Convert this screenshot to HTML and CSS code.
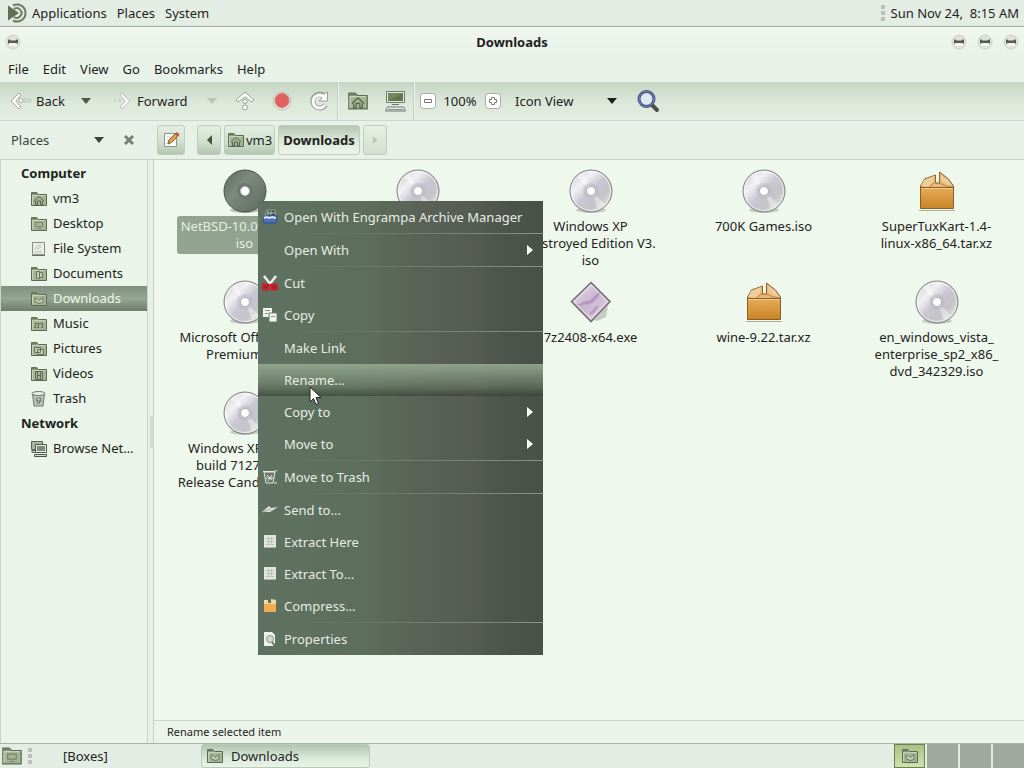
FILE: index.html
```
<!DOCTYPE html>
<html lang="en">
<head>
  <meta charset="UTF-8">
  <title>Downloads</title>
  <link rel="stylesheet" href="styles.css">
</head>
<body>
  <!-- shared icons -->
  <svg class="defs" width="0" height="0" aria-hidden="true">
    <defs>
      <linearGradient id="g-disc" x1="0" y1="0" x2="1" y2="1">
        <stop offset="0" stop-color="#c3c4c6"/>
        <stop offset=".3" stop-color="#f1f1f4"/>
        <stop offset=".5" stop-color="#c9c7d2"/>
        <stop offset=".7" stop-color="#c4c4c8"/>
        <stop offset="1" stop-color="#f3f5f1"/>
      </linearGradient>
      <linearGradient id="g-dark" x1="0" y1="0" x2="1" y2="1">
        <stop offset="0" stop-color="#5f6b5e"/>
        <stop offset=".4" stop-color="#7c897b"/>
        <stop offset="1" stop-color="#5d695c"/>
      </linearGradient>
      <linearGradient id="g-box" x1="0" y1="0" x2="0" y2="1">
        <stop offset="0" stop-color="#e6ab58"/>
        <stop offset="1" stop-color="#c98425"/>
      </linearGradient>
      <linearGradient id="g-exe" x1="0" y1="0" x2="1" y2="1">
        <stop offset="0" stop-color="#e8e0ea"/>
        <stop offset=".5" stop-color="#cbb5d1"/>
        <stop offset="1" stop-color="#e2d8e5"/>
      </linearGradient>
      <symbol id="disc" viewBox="0 0 44 44">
        <ellipse cx="22" cy="41" rx="15" ry="3" fill="#c5cec3"/>
        <circle cx="22" cy="22" r="21" fill="url(#g-disc)" stroke="#7d817d"/>
        <circle cx="22" cy="22" r="19.5" fill="none" stroke="#fff" stroke-opacity=".6"/>
        <path d="M22 22 8 8l6-4zM22 22l14 13-7 5z" fill="#fff" fill-opacity=".4"/>
        <circle cx="22" cy="22" r="8" fill="#b9b9c4" fill-opacity=".55"/>
        <circle cx="22" cy="22" r="4.5" fill="#fff" stroke="#b1b1b9"/>
      </symbol>
      <symbol id="disc-dark" viewBox="0 0 44 44">
        <ellipse cx="22" cy="41" rx="15" ry="3" fill="#b5beb3"/>
        <circle cx="22" cy="22" r="21" fill="url(#g-dark)" stroke="#4a554a"/>
        <circle cx="22" cy="22" r="8" fill="#6d776f"/>
        <circle cx="22" cy="22" r="4.5" fill="#fff" stroke="#b6c0b5"/>
      </symbol>
      <symbol id="box" viewBox="0 0 44 44">
        <path d="M4 41.500h36" stroke="#a9ad98"/>
        <path d="M5.500 20v-3l4-7 11-4v8h4V3l9 7 5 7v3z" fill="#e9b875" stroke="#86653a" stroke-linejoin="round"/>
        <path d="m9 11 10-4-1 6-5 5-7-1zM26 6l7 5 4 6-6-2-5-4z" fill="#f0cc98"/>
        <path d="m6 18 7 1 6-5h5l7 3 7 1" fill="none" stroke="#b98a4c"/>
        <path d="M5.500 18.500h33v21h-33z" fill="url(#g-box)" stroke="#86602a"/>
        <path d="M6.500 19.500h31" stroke="#f3cd90"/>
      </symbol>
      <symbol id="exe" viewBox="0 0 44 44">
        <path d="m25 40 14-15-2 12-9 4z" fill="#c8ccc6"/>
        <path d="M22 2.500 41 21.500 22 41.500 2.500 21.500z" fill="url(#g-exe)" stroke="#737076" stroke-width="1.600"/>
        <path d="M22 5 38.500 21.500 22 39 5 21.500z" fill="none" stroke="#fff" stroke-opacity=".6"/>
        <path d="M7 24c5 1 6-3 10-3 5 1 8-6 14-9-1 5-4 7-7 10s-8 1-12 4zM20 33c4-2 5-6 10-8-1 4-4 7-8 10z" fill="#9a79a8" fill-opacity=".5"/>
      </symbol>
      <symbol id="folder" viewBox="0 0 18 18">
        <path d="M1.500 2.500h5l2 2h8v11h-15z" fill="#a5b494" stroke="#5c6a52" stroke-linejoin="round"/>
        <path d="M1.500 4.500h6v-2h-6z" fill="#6d7d62"/>
        <path d="M2.500 14.500v-9h13" fill="none" stroke="#cfd9c2" stroke-opacity=".8"/>
      </symbol>
      <symbol id="home" viewBox="0 0 18 18">
        <use href="#folder"/>
        <path d="m4 11 5-4.500 5 4.500M5.500 11v3.500h2V11h3v3.500h2V11" fill="none" stroke="#55644d"/>
      </symbol>
      <symbol id="down" viewBox="0 0 18 18">
        <use href="#folder"/>
        <path d="M5 8.500h2l2 2 4-3v5l-4 1-4-2z" fill="#c3d0b6" stroke="#697a5c"/>
      </symbol>
      <symbol id="desk" viewBox="0 0 18 18">
        <use href="#folder"/>
        <path d="M5.500 7.500h7v4h-7zM7 13.500h4" fill="none" stroke="#77866c"/>
      </symbol>
      <symbol id="docs" viewBox="0 0 18 18">
        <use href="#folder"/>
        <path d="M6.500 6.500h3v7h-3zM9.500 7.500h3v5h-3" fill="#c2cdb5" stroke="#66745c"/>
      </symbol>
      <symbol id="music" viewBox="0 0 18 18">
        <use href="#folder"/>
        <path d="M5 8.500h8M5.500 8v5M8.500 8v5M12.500 8v5M4 12.500h2M7 12.500h2M11 12.500h2" fill="none" stroke="#66745c"/>
      </symbol>
      <symbol id="pics" viewBox="0 0 18 18">
        <use href="#folder"/>
        <path d="M4.500 7.500h6v5h-6zM7.500 9.500h6v5h-6z" fill="#c2cdb5" stroke="#66745c"/>
      </symbol>
      <symbol id="vids" viewBox="0 0 18 18">
        <use href="#folder"/>
        <path d="M5.500 6.500h7v8h-7zM7.500 6.500v8M10.500 6.500v8M7.500 10.500h3" fill="none" stroke="#5d6c55"/>
      </symbol>
      <symbol id="drive" viewBox="0 0 18 18">
        <path d="M2.500 2.500h12v12h-12z" fill="#eceeea" stroke="#878c84"/>
        <path d="M2 15.500h13" stroke="#6c716a"/>
        <path d="M5 9.500c1-4 5-4 6-5M7 9l4-2M5 12h7" fill="none" stroke="#b7bab5"/>
      </symbol>
      <symbol id="trash" viewBox="0 0 18 18">
        <path d="M2.500 4 4 16h9l1.500-12z" fill="#bcc3b9" stroke="#6f776d"/>
        <ellipse cx="8.500" cy="3.500" rx="6.500" ry="2" fill="#e9ede6" stroke="#6f776d"/>
        <path d="m6 8 2 6M11 8l-2 6M6 11h6M7 8h4" fill="none" stroke="#717a70"/>
      </symbol>
      <symbol id="net" viewBox="0 0 18 18">
        <path d="M1.500 1.500h11v8h-11z" fill="#aab5a2" stroke="#5b6358"/>
        <path d="M2 12.500h4v-2H2z" fill="#d7ddd2" stroke="#5b6358"/>
        <path d="M5.500 4.500h11v8h-11z" fill="#e8ece5" stroke="#4e554c"/>
        <path d="M7 6h8v5H7z" fill="#7c8b75"/>
        <path d="M4.500 14.500h12v2h-12z" fill="#d7ddd2" stroke="#4e554c"/>
      </symbol>
      <symbol id="tri-down" viewBox="0 0 10 6"><path d="M0 0h10L5 6z" fill="currentColor"/></symbol>
      <symbol id="tri-right" viewBox="0 0 6 10"><path d="M0 0v10l6-5z" fill="currentColor"/></symbol>
      <symbol id="wbtn" viewBox="0 0 16 16">
        <circle cx="8" cy="8" r="7" fill="#dde1db" stroke="#ced3cb"/>
        <path d="M3 10V5.500h1.500l1 1h5l1-1H13V10l-1.500-1h-7z" fill="#555b54"/>
        <path d="M4 12V10l1.500-1h5l1.500 1v2z" fill="#f2f5f0"/>
      </symbol>
      <symbol id="extract" viewBox="0 0 16 16">
        <path d="M2 1h12v12H2z" fill="#e2e6e0"/>
        <path d="M4 4.500h8M4 7.500h8M4 10.500h8M6.500 3v8M9.500 3v8" stroke="#bac2b7"/>
        <path d="M2 13.500h12" stroke="#a9b3a6"/>
      </symbol>
    </defs>
  </svg>

  <header class="panel">
    <svg class="logo" width="22" height="22" viewBox="0 0 22 22">
      <path d="M6 3.500a8.500 8.500 0 1 1 0 15" fill="none" stroke="#6c7c62" stroke-width="2"/>
      <path d="M7 7a4.800 4.800 0 1 1 0 8" fill="none" stroke="#6c7c62" stroke-width="2"/>
      <path d="M1 3.500 12 11 1 18.500z" fill="#5f7055"/>
    </svg>
    <nav class="panel-menu">
      <button type="button">Applications</button>
      <button type="button">Places</button>
      <button type="button">System</button>
    </nav>
    <span class="grip"></span>
    <time class="clock">Sun Nov 24,&nbsp; 8:15 AM</time>
  </header>

  <main class="window">
    <div class="titlebar">
      <button type="button" aria-label="Window menu"><svg width="16" height="16"><use href="#wbtn"/></svg></button>
      <h1>Downloads</h1>
      <div class="window-buttons">
        <button type="button" aria-label="Minimize"><svg width="16" height="16"><use href="#wbtn"/></svg></button>
        <button type="button" aria-label="Maximize"><svg width="16" height="16"><use href="#wbtn"/></svg></button>
        <button type="button" aria-label="Close"><svg width="16" height="16"><use href="#wbtn"/></svg></button>
      </div>
    </div>

    <nav class="menubar">
      <button type="button">File</button>
      <button type="button">Edit</button>
      <button type="button">View</button>
      <button type="button">Go</button>
      <button type="button">Bookmarks</button>
      <button type="button">Help</button>
    </nav>

    <div class="toolbar">
      <button type="button" class="nav-btn back">
        <svg width="22" height="20" viewBox="0 0 22 20">
          <path d="M9 2 1 10l8 8 2-2-5-6 5-6z" fill="#fbfdfa" stroke="#a3aba1"/>
          <circle cx="11" cy="9.500" r="2" fill="#fff" stroke="#a3aba1"/>
          <circle cx="15.500" cy="9.500" r="1.500" fill="#fff" stroke="#a3aba1"/>
          <circle cx="19.500" cy="9.500" r="1.500" fill="#fff" stroke="#a3aba1"/>
        </svg>
        Back
      </button>
      <button type="button" class="drop" aria-label="Back history"><svg width="10" height="6"><use href="#tri-down"/></svg></button>
      <button type="button" class="nav-btn forward">
        <svg width="20" height="20" viewBox="0 0 20 20">
          <path d="m9 2 8 8-8 8-2-2 5-6-5-6z" fill="#f4f7f2" stroke="#b9c1b6"/>
          <path d="M1 9.500h2M5 9.500h3" stroke="#ccd4c9" stroke-width="3"/>
        </svg>
        Forward
      </button>
      <button type="button" class="drop off" aria-label="Forward history"><svg width="10" height="6"><use href="#tri-down"/></svg></button>
      <button type="button" class="tool" aria-label="Up">
        <svg width="22" height="22" viewBox="0 0 22 22">
          <path d="m11 2 9 8-2 2-7-5-7 5-2-2z" fill="#fbfdfa" stroke="#98a095"/>
          <circle cx="11" cy="11.500" r="2" fill="#fff" stroke="#98a095"/>
          <circle cx="11" cy="17.500" r="2.500" fill="#fff" stroke="#98a095"/>
        </svg>
      </button>
      <button type="button" class="tool" aria-label="Stop">
        <svg width="20" height="20" viewBox="0 0 20 20">
          <circle cx="10" cy="10" r="9" fill="#e9e6e0" stroke="#b9beb4"/>
          <circle cx="10" cy="9.500" r="7" fill="#e0615f" stroke="#cf7772"/>
        </svg>
      </button>
      <button type="button" class="tool" aria-label="Reload">
        <svg width="20" height="20" viewBox="0 0 20 20">
          <path d="M15 4.500A7 7 0 1 0 16.500 14" fill="none" stroke="#98a095" stroke-width="5"/>
          <path d="M18.500 1v9H10l3-3-1-1 3-3z" fill="#fff" stroke="#98a095"/>
          <path d="M14 5A6.500 6.500 0 1 0 16 14" fill="none" stroke="#fbfdfa" stroke-width="3"/>
        </svg>
      </button>
      <span class="sep"></span>
      <button type="button" class="tool" aria-label="Home"><svg width="24" height="22" viewBox="0 0 18 18"><use href="#home"/></svg></button>
      <button type="button" class="tool" aria-label="Computer">
        <svg width="22" height="22" viewBox="0 0 22 22">
          <path d="M2.500 1.500h18v11h-18z" fill="#e4e8e0" stroke="#71796d"/>
          <path d="M4 3h15v8H4z" fill="#60734d"/>
          <path d="m4 11 15-8H4z" fill="#758862"/>
          <path d="M8 14.500h7M3.500 17h16l2 4h-20z" fill="#e9ece8" stroke="#6d746c"/>
          <path d="M4 19.500h15" stroke="#858ca2"/>
        </svg>
      </button>
      <span class="sep"></span>
      <button type="button" class="zoom" aria-label="Zoom out">
        <svg width="16" height="16" viewBox="0 0 16 16">
          <rect x=".5" y=".5" width="15" height="15" rx="3" fill="#fff" stroke="#a7ada5"/>
          <path d="M4.500 6.500h7v3h-7z" fill="#fff" stroke="#777e75"/>
        </svg>
      </button>
      <span class="zoom-level">100%</span>
      <button type="button" class="zoom" aria-label="Zoom in">
        <svg width="16" height="16" viewBox="0 0 16 16">
          <rect x=".5" y=".5" width="15" height="15" rx="3" fill="#fff" stroke="#a7ada5"/>
          <path d="M6.500 4.500h3v2h2v3h-2v2h-3v-2h-2v-3h2z" fill="#fff" stroke="#777e75"/>
        </svg>
      </button>
      <div class="select view-mode">
        <select aria-label="View mode"><option>Icon View</option></select>
        <svg width="10" height="6"><use href="#tri-down"/></svg>
      </div>
      <button type="button" class="tool" aria-label="Search">
        <svg width="24" height="24" viewBox="0 0 24 24">
          <path d="m15 15 6 6" stroke="#4b504d" stroke-width="4" stroke-linecap="round"/>
          <circle cx="10.500" cy="10" r="7.500" fill="#dfe8ee" stroke="#3e4d86" stroke-width="3"/>
          <circle cx="10.500" cy="10" r="7.500" fill="none" stroke="#7f8dbb"/>
        </svg>
      </button>
    </div>

    <div class="location">
      <div class="side-head">
        <div class="select">
          <select aria-label="Side pane"><option>Places</option></select>
          <svg width="10" height="6"><use href="#tri-down"/></svg>
        </div>
        <button type="button" class="close" aria-label="Close side pane">
          <svg width="12" height="12" viewBox="0 0 12 12"><path d="m2 2 8 8M10 2l-8 8" stroke="#7a8277" stroke-width="3"/></svg>
        </button>
      </div>
      <button type="button" class="path edit" aria-label="Edit location">
        <svg width="18" height="18" viewBox="0 0 18 18">
          <path d="M2.500 2.500h12v13h-12z" fill="#fff" stroke="#8e958b"/>
          <path d="M4.500 6h5M4.500 9h4M4.500 12h3" stroke="#c3c8c1"/>
          <path d="m6 13 1-4 7-7 2.500 2.500-7 7z" fill="#e0a64a" stroke="#7d5b33"/>
          <path d="m13 3 2-2 2.500 2.500-2 2z" fill="#c0504a"/>
        </svg>
      </button>
      <button type="button" class="path prev" aria-label="Scroll left"><svg width="5" height="10" viewBox="0 0 5 10"><path d="M5 0v10L0 5z" fill="#47513f"/></svg></button>
      <button type="button" class="path"><svg width="18" height="18"><use href="#home"/></svg>vm3</button>
      <button type="button" class="path current">Downloads</button>
      <button type="button" class="path next" aria-label="Scroll right" disabled><svg width="6" height="8" viewBox="0 0 6 10"><use href="#tri-right"/></svg></button>
    </div>

    <div class="panes">
      <aside class="sidebar">
        <h2>Computer</h2>
        <a href="#"><svg width="18" height="18"><use href="#home"/></svg>vm3</a>
        <a href="#"><svg width="18" height="18"><use href="#desk"/></svg>Desktop</a>
        <a href="#"><svg width="18" height="18"><use href="#drive"/></svg>File System</a>
        <a href="#"><svg width="18" height="18"><use href="#docs"/></svg>Documents</a>
        <a href="#" class="active"><svg width="18" height="18"><use href="#down"/></svg>Downloads</a>
        <a href="#"><svg width="18" height="18"><use href="#music"/></svg>Music</a>
        <a href="#"><svg width="18" height="18"><use href="#pics"/></svg>Pictures</a>
        <a href="#"><svg width="18" height="18"><use href="#vids"/></svg>Videos</a>
        <a href="#"><svg width="18" height="18"><use href="#trash"/></svg>Trash</a>
        <h2>Network</h2>
        <a href="#"><svg width="18" height="18"><use href="#net"/></svg>Browse Net…</a>
      </aside>
      <div class="splitter"><span></span></div>
      <section class="content">
        <div class="files">
          <div class="file selected"><svg width="44" height="44"><use href="#disc-dark"/></svg><span>NetBSD-10.0-amd64-<br>iso</span></div>
          <div class="file"><svg width="44" height="44"><use href="#disc"/></svg></div>
          <div class="file"><svg width="44" height="44"><use href="#disc"/></svg><span>Windows XP<br>Destroyed Edition V3.<br>iso</span></div>
          <div class="file"><svg width="44" height="44"><use href="#disc"/></svg><span>700K Games.iso</span></div>
          <div class="file"><svg width="44" height="44"><use href="#box"/></svg><span>SuperTuxKart-1.4-<br>linux-x86_64.tar.xz</span></div>
          <div class="file"><svg width="44" height="44"><use href="#disc"/></svg><span>Microsoft Office 2000<br>Premium.iso</span></div>
          <div class="file"></div>
          <div class="file"><svg width="44" height="44"><use href="#exe"/></svg><span>7z2408-x64.exe</span></div>
          <div class="file"><svg width="44" height="44"><use href="#box"/></svg><span>wine-9.22.tar.xz</span></div>
          <div class="file"><svg width="44" height="44"><use href="#disc"/></svg><span>en_windows_vista_<br>enterprise_sp2_x86_<br>dvd_342329.iso</span></div>
          <div class="file"><svg width="44" height="44"><use href="#disc"/></svg><span>Windows XP Mode<br>build 7127 (x64)<br>Release Candidate.iso</span></div>
        </div>
        <footer class="status">Rename selected item</footer>
      </section>
    </div>
  </main>

  <footer class="taskbar">
    <button type="button" class="show-desktop" aria-label="Show desktop"><svg width="22" height="22" viewBox="0 0 18 18"><use href="#desk"/></svg></button>
    <span class="grip"></span>
    <button type="button" class="task">[Boxes]</button>
    <button type="button" class="task on"><svg width="18" height="18"><use href="#down"/></svg>Downloads</button>
    <div class="workspaces">
      <button type="button" class="on" aria-label="Workspace 1"><svg width="20" height="18" viewBox="0 0 18 18"><use href="#down"/></svg></button>
      <button type="button" aria-label="Workspace 2"></button>
      <button type="button" aria-label="Workspace 3"></button>
      <button type="button" aria-label="Workspace 4"></button>
    </div>
  </footer>

  <div class="context-menu" role="menu">
    <button type="button" role="menuitem">
      <svg width="16" height="16" viewBox="0 0 16 16">
        <path d="M3 6 5 1h8l1 6z" fill="#3f4a45" stroke="#9aa69a"/>
        <path d="M5 4h8M6 2v4M9 2v4" stroke="#b8c2bc"/>
        <path d="M1 9c3-3 9-3 14-2l-1 7H2z" fill="#4a6fbd" stroke="#2f4f97"/>
        <path d="M2 9c3-2 5 1 8-1l4 1" fill="none" stroke="#e3ebf5" stroke-width="2"/>
      </svg>
      Open With Engrampa Archive Manager
    </button>
    <hr>
    <button type="button" role="menuitem" class="sub">Open With<svg width="6" height="10"><use href="#tri-right"/></svg></button>
    <hr>
    <button type="button" role="menuitem">
      <svg width="16" height="16" viewBox="0 0 16 16">
        <path d="m2 1 7 9M14 1l-7 9" stroke="#eef1ed" stroke-width="2.500"/>
        <path d="M1 9.500h5.500v5H1zM9.500 9.500H15v5H9.500z" fill="#8c2a2c" stroke="#cf2029" stroke-width="2" stroke-linejoin="round"/>
        <path d="M6 10h4" stroke="#cf2029" stroke-width="2"/>
      </svg>
      Cut
    </button>
    <button type="button" role="menuitem">
      <svg width="16" height="16" viewBox="0 0 16 16">
        <path d="M1 1h9v9H1z" fill="#f0f3ee"/>
        <path d="M3 3.500h5M3 6.500h3" stroke="#89938a"/>
        <path d="M7 6h8v9H7z" fill="#f0f3ee" stroke="#6c7c6b"/>
        <path d="M9 9.500h4" stroke="#89938a"/>
      </svg>
      Copy
    </button>
    <hr>
    <button type="button" role="menuitem">Make Link</button>
    <button type="button" role="menuitem" class="hover">Rename...</button>
    <button type="button" role="menuitem" class="sub">Copy to<svg width="6" height="10"><use href="#tri-right"/></svg></button>
    <button type="button" role="menuitem" class="sub">Move to<svg width="6" height="10"><use href="#tri-right"/></svg></button>
    <hr>
    <button type="button" role="menuitem">
      <svg width="16" height="16" viewBox="0 0 16 16">
        <path d="m2 3 2 11h7l2-11z" fill="#6d7a6b" stroke="#dfe4dc"/>
        <path d="M1 2.500h11l3-1M5 6l5 5M10 6l-4 6M4 9h8M12 14h3" fill="none" stroke="#e6eae4"/>
      </svg>
      Move to Trash
    </button>
    <hr>
    <button type="button" role="menuitem">
      <svg width="16" height="16" viewBox="0 0 16 16">
        <path d="m0 10 7-6 2 2 7-1-8 5z" fill="#dce2da"/>
        <path d="m1 10 8-3" stroke="#9ca89b"/>
      </svg>
      Send to...
    </button>
    <button type="button" role="menuitem"><svg width="16" height="16"><use href="#extract"/></svg>Extract Here</button>
    <button type="button" role="menuitem"><svg width="16" height="16"><use href="#extract"/></svg>Extract To...</button>
    <button type="button" role="menuitem">
      <svg width="16" height="16" viewBox="0 0 16 16">
        <path d="M2 6V2h4v3h3V1l5 1v5z" fill="#f6d9a8"/>
        <path d="M2 5h12v9H2z" fill="#f0ac4e"/>
        <path d="M2 5.500h12" stroke="#f8d08f"/>
      </svg>
      Compress...
    </button>
    <hr>
    <button type="button" role="menuitem">
      <svg width="16" height="16" viewBox="0 0 16 16">
        <path d="M2 1h8l3 3v11H2z" fill="#edf0eb"/>
        <circle cx="8" cy="8" r="3.500" fill="#cfd8cd" stroke="#8a968a"/>
        <path d="m10 11 3 4" stroke="#667265" stroke-width="2"/>
      </svg>
      Properties
    </button>
  </div>

  <svg class="pointer" width="13" height="20" viewBox="0 0 13 20">
    <path d="M1 1v15l3.500-3.500L7 18.500l2.500-1L7 11.500h5z" fill="#fff" stroke="#222" stroke-linejoin="round"/>
  </svg>
</body>
</html>
```
FILE: styles.css
```
* {
  box-sizing: border-box;
}

body {
  margin: 0;
  min-height: 100vh;
  display: flex;
  flex-direction: column;
  font-family: "Noto Sans", sans-serif;
  font-size: 13px;
  line-height: 17px;
  color: #1d231c;
  background: #e8f1e7;
}

button,
select {
  font: inherit;
  color: inherit;
  background: none;
  border: none;
  margin: 0;
  padding: 0;
  white-space: nowrap;
}

svg {
  display: block;
  flex: none;
}

.defs {
  position: absolute;
}

/* top panel */
.panel {
  display: flex;
  align-items: center;
  height: 27px;
  padding: 0 5px 0 7px;
  background: #e4ede3;
  border-bottom: 1px solid #a3aca2;
}

.panel-menu {
  display: flex;
  gap: 10px;
  margin-left: 3px;
}

.grip {
  width: 4px;
  height: 16px;
  background: repeating-linear-gradient(#b9c1b7 0 4px, transparent 4px 6px);
}

.panel .grip {
  margin-left: auto;
  margin-right: 6px;
}

/* window */
.window {
  flex: 1;
  display: flex;
  flex-direction: column;
}

.titlebar {
  display: grid;
  grid-template-columns: 1fr auto 1fr;
  align-items: center;
  height: 30px;
  padding: 0 5px;
  background: linear-gradient(#f0f7ee, #e8f2e8);
}

.titlebar h1 {
  margin: 0;
  font-size: 13px;
}

.window-buttons {
  display: flex;
  gap: 10px;
  justify-content: flex-end;
}

.menubar {
  display: flex;
  gap: 14px;
  height: 25px;
  padding: 0 8px;
  background: #e8f2e8;
}

/* toolbar */
.toolbar {
  display: flex;
  align-items: center;
  height: 39px;
  background: linear-gradient(#c6d5c4, #dbe7d9 50%, #e4eee2);
  border-bottom: 1px solid #cdd8cb;
}

.nav-btn {
  display: flex;
  align-items: center;
  gap: 4px;
}

.back {
  width: 72px;
  padding-left: 10px;
}

.forward {
  width: 98px;
  padding-left: 13px;
}

.drop {
  width: 28px;
  display: flex;
  justify-content: center;
  color: #4d574b;
}

.drop.off {
  color: #b9c5b6;
}

.tool {
  width: 37px;
  display: flex;
  justify-content: center;
}

.sep {
  width: 2px;
  align-self: stretch;
  background: #c3cfc1;
  border-right: 1px solid #edf5eb;
}

.zoom {
  width: 25px;
  display: flex;
  justify-content: center;
}

.zoom-level {
  width: 40px;
  text-align: center;
}

.select {
  display: grid;
  align-items: center;
}

.select > * {
  grid-area: 1 / 1;
}

.select select {
  appearance: none;
}

.select svg {
  justify-self: end;
  pointer-events: none;
}

.view-mode {
  width: 102px;
  margin: 0 12px 0 10px;
}

/* location bar */
.location {
  display: flex;
  align-items: center;
  height: 38px;
  gap: 3px;
}

.side-head {
  width: 148px;
  padding: 0 13px 0 11px;
  display: flex;
  align-items: center;
  justify-content: space-between;
  color: #3b443a;
}

.side-head .select {
  width: 93px;
}

.path {
  display: flex;
  align-items: center;
  justify-content: center;
  gap: 1px;
  height: 30px;
  padding: 0 2px;
  background: linear-gradient(#e4efe2, #cfdfcd 60%, #b4c7b1);
  border: 1px solid #c0cdbd;
  border-radius: 3px;
}

.edit {
  width: 28px;
  margin-left: 6px;
  margin-right: 9px;
}

.prev,
.next {
  width: 24px;
}

.path.current {
  padding: 0 4px;
  font-weight: bold;
  background: linear-gradient(#b5c6b2, #dbe7d9 50%, #edf5eb);
}

.next:disabled {
  color: #b9c5b7;
  background: linear-gradient(#e6f0e4, #d2dfd0);
}

/* panes */
.panes {
  flex: 1;
  display: flex;
  border-top: 1px solid #c5cfc3;
}

.sidebar {
  width: 148px;
  padding: 1px 0;
  background: #eaf4e8;
  border: 1px solid #c9d3c7;
  border-top: none;
  border-bottom: none;
}

.sidebar h2 {
  margin: 0;
  padding-left: 20px;
  font-size: 13px;
  line-height: 25px;
}

.sidebar a {
  display: flex;
  align-items: center;
  gap: 5px;
  height: 25px;
  padding-left: 29px;
  color: inherit;
  text-decoration: none;
  white-space: nowrap;
}

.sidebar a.active {
  color: #eef5ec;
  background: linear-gradient(#7f907c, #94a691 50%, #6d7e6a);
}

.splitter {
  width: 5px;
  display: flex;
  align-items: center;
  justify-content: flex-end;
}

.splitter span {
  width: 3px;
  height: 32px;
  margin-bottom: 40px;
  background: #d6dcd3;
}

.content {
  flex: 1;
  min-width: 0;
  display: flex;
  flex-direction: column;
  border-left: 1px solid #c9d3c7;
}

.files {
  flex: 1;
  display: grid;
  grid-template-columns: repeat(auto-fill, 173px);
  grid-auto-rows: 111px;
  align-content: start;
  padding: 9px 0 0 4px;
  background: #eff8ec;
}

.file {
  display: flex;
  flex-direction: column;
  align-items: center;
  gap: 3px;
}

.file span {
  padding: 2px 4px;
  text-align: center;
  white-space: nowrap;
}

.file.selected span {
  color: #e6eee4;
  background: #92a38f;
  border-radius: 3px;
}

.status {
  height: 23px;
  padding-left: 13px;
  font-size: 11px;
  line-height: 22px;
  border-top: 1px solid #ccd6ca;
  background: #ebf4e9;
}

/* bottom panel */
.taskbar {
  display: flex;
  align-items: center;
  height: 25px;
  padding-left: 1px;
  background: #e3ede3;
  border-top: 1px solid #a9b2a7;
}

.taskbar .grip {
  margin-left: 5px;
}

.task {
  display: flex;
  align-items: center;
  align-self: stretch;
  gap: 7px;
  width: 169px;
  padding-left: 31px;
}

.task.on {
  padding-left: 4px;
  background: linear-gradient(#b0c6b2, #dbe9da 60%, #eaf4e9);
  border: 1px solid #b9cab8;
  border-radius: 3px;
}

.workspaces {
  display: flex;
  align-self: stretch;
  gap: 2px;
  margin-left: auto;
}

.workspaces button {
  width: 31px;
  display: flex;
  align-items: center;
  justify-content: center;
  background: #9fa99d;
}

.workspaces .on {
  background: linear-gradient(#a9c084, #d0e2ae);
  border: 1px solid #6c8050;
}

/* context menu */
.context-menu {
  position: absolute;
  left: 258px;
  top: 201px;
  width: 285px;
  color: #e6ece4;
  background: linear-gradient(to right, #5f7160, #5d6f5c 35%, #5a6156 58%, #565c51 75%, #4c534b 88%, #4a5149);
}

.context-menu button {
  display: flex;
  align-items: center;
  gap: 6px;
  width: 100%;
  height: 32px;
  padding-left: 4px;
}

.context-menu button:not(:has(svg)),
.context-menu .sub {
  padding-left: 26px;
}

.context-menu .sub {
  justify-content: space-between;
  padding-right: 10px;
}

.context-menu .sub svg {
  color: #fff;
}

.context-menu .hover {
  background: linear-gradient(rgba(150, 170, 145, .9), rgba(110, 128, 106, .5) 70%, rgba(50, 62, 48, .6));
}

.context-menu hr {
  height: 1px;
  margin: 0;
  border: none;
  background: linear-gradient(to right, rgba(150, 165, 148, 0) 10%, #8a9587);
}

.pointer {
  position: absolute;
  left: 309px;
  top: 386px;
}
```
